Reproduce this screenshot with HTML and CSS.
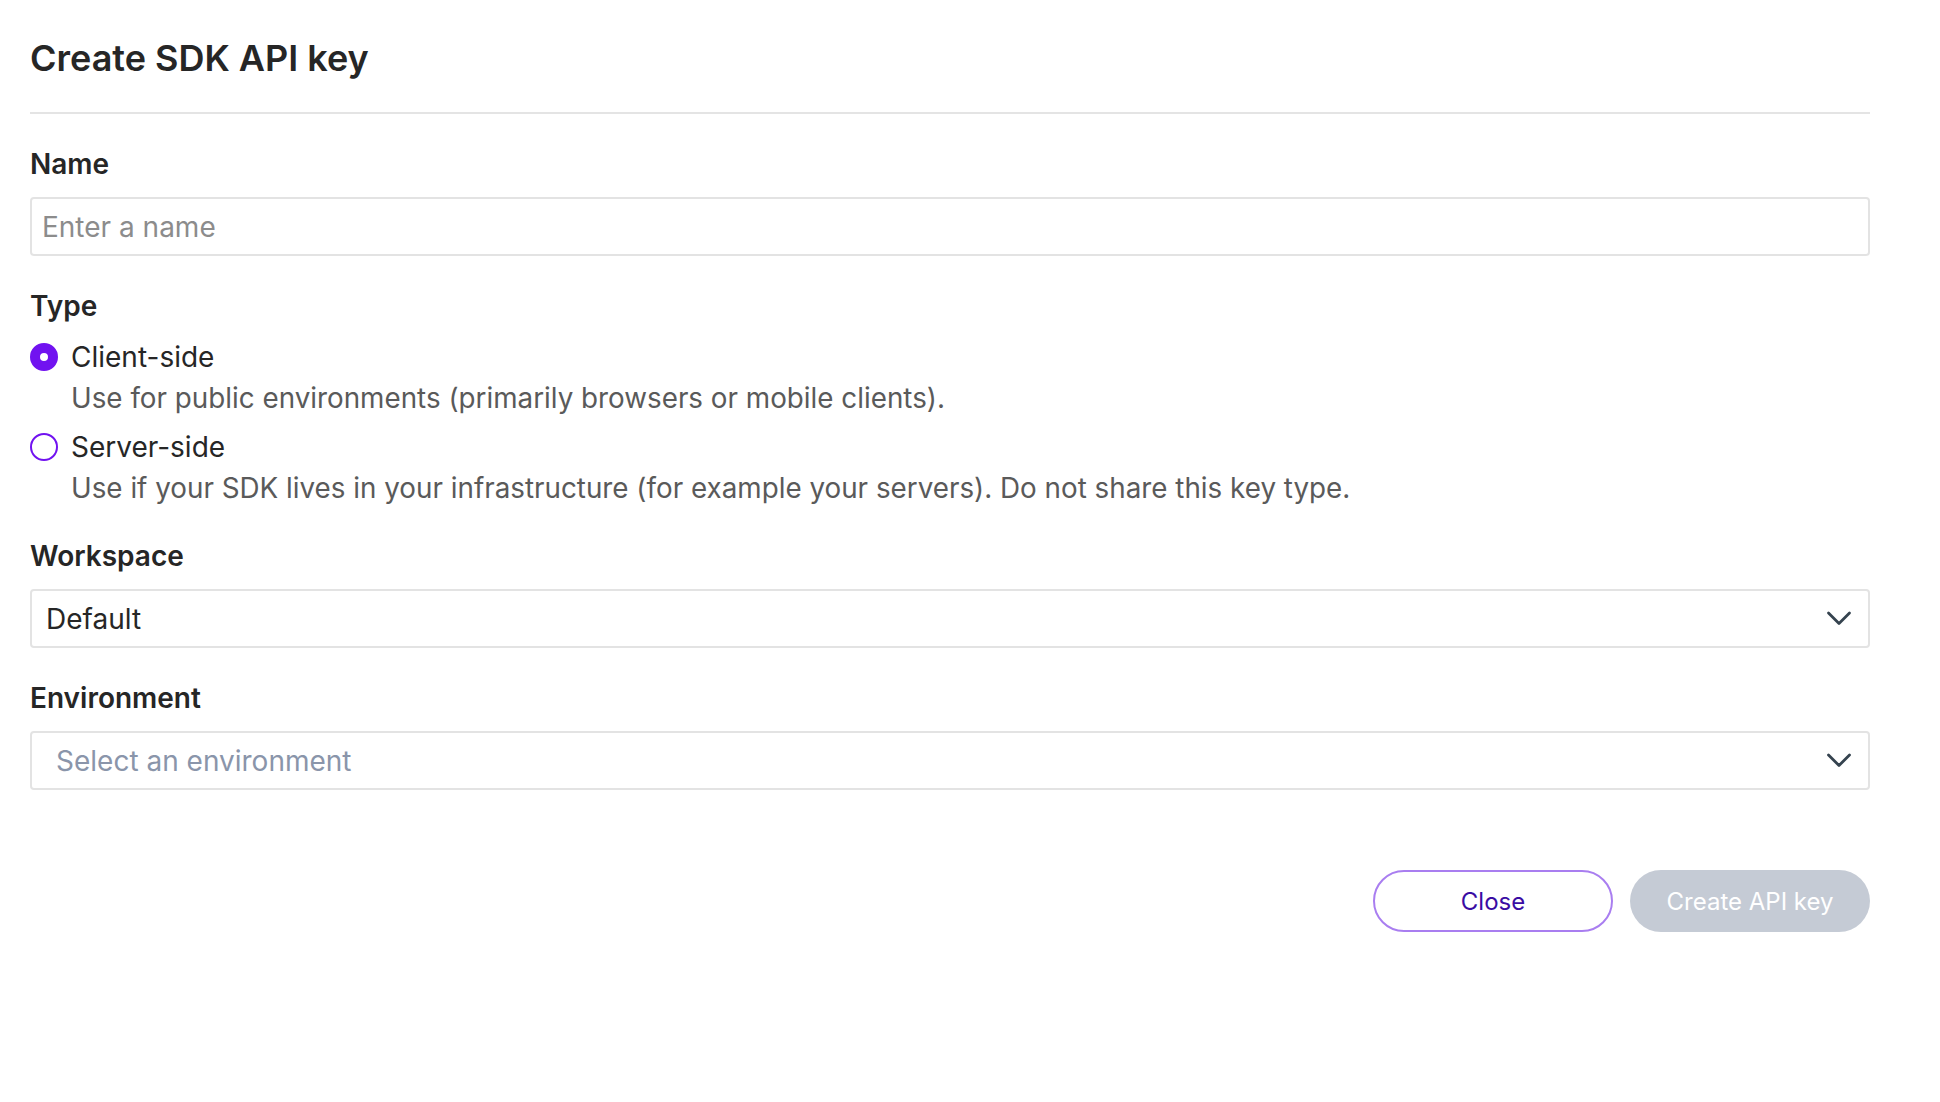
FILE: index.html
```html
<!DOCTYPE html>
<html lang="en">
<head>
  <meta charset="UTF-8">
  <meta name="viewport" content="width=device-width, initial-scale=1.0">
  <title>Create SDK API key</title>
  <link rel="stylesheet" href="styles.css">
</head>
<body>
  <div class="modal">
    <h1 class="modal-title">Create SDK API key</h1>
    <hr class="divider">

    <div class="field">
      <label class="field-label" for="keyName">Name</label>
      <input type="text" id="keyName" class="text-input" placeholder="Enter a name">
    </div>

    <div class="field">
      <div class="field-label">Type</div>
      <div class="options">
        <label class="option">
          <span class="option-row">
            <input type="radio" name="keyType" class="radio" checked>
            <span class="option-title">Client-side</span>
          </span>
          <span class="option-desc">Use for public environments (primarily browsers or mobile clients).</span>
        </label>
        <label class="option">
          <span class="option-row">
            <input type="radio" name="keyType" class="radio">
            <span class="option-title">Server-side</span>
          </span>
          <span class="option-desc">Use if your SDK lives in your infrastructure (for example your servers). Do not share this key type.</span>
        </label>
      </div>
    </div>

    <div class="field">
      <div class="field-label">Workspace</div>
      <div class="select">
        <span class="select-value">Default</span>
        <svg class="chevron" width="26" height="15" viewBox="0 0 26 15" fill="none">
          <path d="M2.5 2l10.5 10.5L23.5 2" stroke="#35434f" stroke-width="2.8" stroke-linecap="round" stroke-linejoin="round"/>
        </svg>
      </div>
    </div>

    <div class="field">
      <div class="field-label">Environment</div>
      <div class="select">
        <span class="select-placeholder">Select an environment</span>
        <svg class="chevron" width="26" height="15" viewBox="0 0 26 15" fill="none">
          <path d="M2.5 2l10.5 10.5L23.5 2" stroke="#35434f" stroke-width="2.8" stroke-linecap="round" stroke-linejoin="round"/>
        </svg>
      </div>
    </div>

    <div class="actions">
      <button class="btn btn-outline">Close</button>
      <button class="btn btn-disabled" disabled>Create API key</button>
    </div>
  </div>
</body>
</html>
```

FILE: styles.css
```css
body {
  margin: 0;
  font-family: Inter, "Noto Sans", sans-serif;
  color: #262626;
  background: #fff;
}
.modal {
  padding: 36px 70px 0 30px;
}
.modal-title {
  margin: 0;
  font-size: 36px;
  line-height: 44px;
  font-weight: 600;
  color: #262626;
}
.divider {
  margin: 32px 0 0;
  border: none;
  border-top: 2px solid #e4e4e4;
}
.field {
  margin-top: 33px;
  display: flex;
  flex-direction: column;
}
.field-label {
  font-size: 28px;
  line-height: 34px;
  font-weight: 600;
  color: #262626;
  margin-bottom: 16px;
}
.text-input {
  height: 59px;
  box-sizing: border-box;
  border: 2px solid #e3e3e3;
  border-radius: 4px;
  padding: 0 10px;
  font-family: inherit;
  font-size: 28px;
  color: #262626;
  outline: none;
}
.text-input::placeholder {
  color: #8c8c8c;
}
.options {
  display: flex;
  flex-direction: column;
  gap: 13px;
}
.option {
  display: flex;
  flex-direction: column;
  gap: 5px;
  cursor: pointer;
}
.option-row {
  display: flex;
  align-items: center;
  gap: 13px;
}
.radio {
  appearance: none;
  -webkit-appearance: none;
  margin: 0;
  width: 28px;
  height: 28px;
  border-radius: 50%;
  border: 2px solid #7112f0;
  box-sizing: border-box;
  flex: none;
}
.radio:checked {
  background: #fff;
  border: 10px solid #7112f0;
}
.option-title {
  font-size: 28px;
  line-height: 36px;
  color: #262626;
}
.option-desc {
  padding-left: 41px;
  font-size: 27.8px;
  line-height: 36px;
  color: #5a5a5a;
}
.select {
  height: 59px;
  box-sizing: border-box;
  border: 2px solid #e3e3e3;
  border-radius: 4px;
  display: flex;
  align-items: center;
  justify-content: space-between;
  padding: 0 16px 0 14px;
}
.select-value {
  font-size: 28px;
  color: #262626;
}
.select-placeholder {
  padding-left: 10px;
  font-size: 28px;
  color: #8a95aa;
}
.actions {
  margin-top: 80px;
  display: flex;
  justify-content: flex-end;
  gap: 17px;
}
.btn {
  width: 240px;
  height: 62px;
  border-radius: 31px;
  font-family: inherit;
  font-size: 24px;
  box-sizing: border-box;
  cursor: pointer;
}
.btn-outline {
  background: #fff;
  border: 2px solid #a97ef0;
  color: #3a0ca3;
}
.btn-disabled {
  background: #c5cbd5;
  border: none;
  color: #fff;
  cursor: default;
}
```
